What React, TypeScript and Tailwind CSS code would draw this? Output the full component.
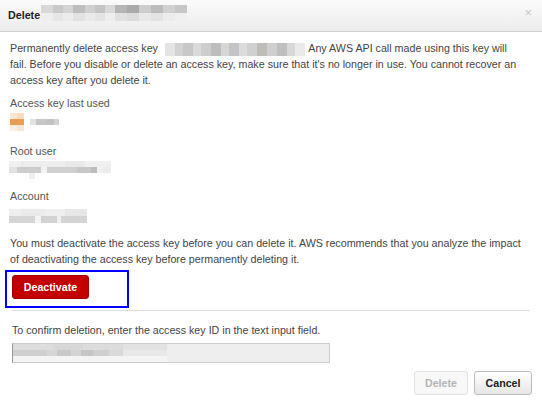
import React from "react";

type Cell = { w: number; c: string };

function Blur({ rows, h, className }: { rows: Cell[][]; h: number; className?: string }) {
  return (
    <div className={"inline-flex flex-col align-middle " + (className ?? "")}>
      {rows.map((row, i) => (
        <div key={i} className="flex">
          {row.map((cell, j) => (
            <div key={j} style={{ width: cell.w, height: h, background: cell.c }} />
          ))}
        </div>
      ))}
    </div>
  );
}

const titleRows: Cell[][] = [
  [
    { w: 12, c: "#d8d8d8" }, { w: 10, c: "#c9c9c9" }, { w: 10, c: "#d4d4d4" }, { w: 12, c: "#bdbdbd" },
    { w: 10, c: "#cfcfcf" }, { w: 10, c: "#c4c4c4" }, { w: 10, c: "#d9d9d9" }, { w: 12, c: "#b5b5b5" },
    { w: 12, c: "#a9a9a9" }, { w: 12, c: "#cdcdcd" }, { w: 12, c: "#bcbcbc" }, { w: 12, c: "#d1d1d1" },
    { w: 12, c: "#c6c6c6" },
  ],
  [
    { w: 12, c: "#eeeeee" }, { w: 10, c: "#e6e6e6" }, { w: 10, c: "#ececec" }, { w: 12, c: "#e2e2e2" },
    { w: 10, c: "#e9e9e9" }, { w: 10, c: "#e4e4e4" }, { w: 10, c: "#eeeeee" }, { w: 12, c: "#e0e0e0" },
    { w: 12, c: "#dcdcdc" }, { w: 12, c: "#e8e8e8" }, { w: 12, c: "#e3e3e3" }, { w: 12, c: "#ececec" },
    { w: 12, c: "#f0f0f0" },
  ],
];

const keyRows: Cell[][] = [
  [
    { w: 10, c: "#e4e4e4" }, { w: 8, c: "#d2d2d2" }, { w: 10, c: "#c8c8c8" }, { w: 8, c: "#dadada" },
    { w: 10, c: "#cdcdcd" }, { w: 10, c: "#bdbdbd" }, { w: 8, c: "#d6d6d6" }, { w: 10, c: "#c2c4c8" },
    { w: 8, c: "#dcdcdc" }, { w: 10, c: "#d0d0d0" }, { w: 10, c: "#c0bcb8" }, { w: 10, c: "#cfcfcf" },
    { w: 10, c: "#bfbfbf" }, { w: 8, c: "#d8d8d8" }, { w: 10, c: "#eaeaea" },
  ],
];

const lastUsedRows: Cell[][] = [
  [{ w: 7, c: "#fbe7d2" }, { w: 7, c: "#f7dcbe" }, { w: 8, c: "#ffffff" }],
  [{ w: 7, c: "#ec9d4c" }, { w: 7, c: "#ea9f55" }, { w: 6, c: "#ffffff" }, { w: 6, c: "#e2e2e2" }, { w: 10, c: "#c6c6c6" }, { w: 8, c: "#c2c2c2" }, { w: 5, c: "#d2d2d2" }],
  [{ w: 7, c: "#fcefe2" }, { w: 7, c: "#f9e6d2" }],
];

const rootRows: Cell[][] = [
  [{ w: 12, c: "#f0f0f0" }, { w: 20, c: "#ececec" }, { w: 24, c: "#eeeeee" }, { w: 20, c: "#e9e9e9" }, { w: 26, c: "#f0f0f0" }],
  [{ w: 8, c: "#e2e2e2" }, { w: 24, c: "#cdcdcd" }, { w: 6, c: "#f2f2f2" }, { w: 30, c: "#d0d0d0" }, { w: 14, c: "#c8c8c8" }, { w: 6, c: "#bdbdbd" }, { w: 6, c: "#f0f0f0" }, { w: 8, c: "#ebebeb" }],
  [{ w: 20, c: "#ffffff" }, { w: 6, c: "#efefef" }],
];

const accountRows: Cell[][] = [
  [{ w: 12, c: "#eeeeee" }, { w: 24, c: "#ebebeb" }, { w: 20, c: "#efefef" }, { w: 22, c: "#e7e7e7" }],
  [{ w: 26, c: "#d6d6d6" }, { w: 6, c: "#f4f4f4" }, { w: 16, c: "#d2d2d2" }, { w: 4, c: "#f0f0f0" }, { w: 26, c: "#d4d4d4" }],
];

const inputRows: Cell[][] = [
  [{ w: 40, c: "#dddddd" }, { w: 30, c: "#d8d8d8" }, { w: 40, c: "#dcdcdc" }, { w: 44, c: "#e2e2e2" }],
  [{ w: 34, c: "#cfcfcf" }, { w: 10, c: "#d6d6d6" }, { w: 14, c: "#c8c8c8" }, { w: 10, c: "#d4d4d4" }, { w: 12, c: "#c6c6c6" }, { w: 16, c: "#cfcfcf" }, { w: 14, c: "#d9d9d9" }, { w: 44, c: "#e8e8e8" }],
  [{ w: 154, c: "#f4f4f4" }],
];

export default function App() {
  return (
    <div className="w-[542px] h-[403px] overflow-hidden bg-white text-[10.7px] leading-[16px] text-[#444]" style={{ fontFamily: '"Liberation Sans", Arial, sans-serif' }}>
      <div className="h-[32px] flex items-start justify-between border-b border-[#cfcfcf] bg-gradient-to-b from-[#fbfbfb] to-[#ececec] pl-[8px] pr-[8px]">
        <div className="flex items-start pt-[5px]">
          <span className="font-bold text-[#222] pt-[2px] pr-[1px]">Delete</span>
          <Blur rows={titleRows} h={8} />
        </div>
        <span className="text-[#c8c8c8] text-[13px] pt-[5px] pr-[2px]">×</span>
      </div>

      <div className="px-[10px] pt-[8px]">
        <p>
          Permanently delete access key <Blur rows={keyRows} h={13} className="ml-[4px] mr-[1px]" /> Any AWS API call made using this key will
          <br />
          fail. Before you disable or delete an access key, make sure that it's no longer in use. You cannot recover an access key after you delete it.
        </p>

        <div className="mt-[7px] text-[#555]">Access key last used</div>
        <div className="mt-[2px]"><Blur rows={lastUsedRows} h={6} /></div>

        <div className="mt-[12px] text-[#555]">Root user</div>
        <div className="mt-[2px] -ml-[1px]"><Blur rows={rootRows} h={6} /></div>

        <div className="mt-[9px] text-[#555]">Account</div>
        <div className="mt-[2px] -ml-[1px]"><Blur rows={accountRows} h={7} /></div>

        <p className="mt-[12px]">
          You must deactivate the access key before you can delete it. AWS recommends that you analyze the impact of deactivating the access key before permanently deleting it.
        </p>
      </div>

      <div className="ml-[5px] mt-[3px] w-[124px] h-[38px] border-[2px] border-[#0000ff] pl-[5px] pt-[3px]">
        <button className="w-[77px] h-[24px] rounded-[3px] bg-[#c20000] border border-[#a80000] text-white font-bold text-[10.7px]">
          Deactivate
        </button>
      </div>

      <div className="mx-[12px] mt-[2px] border-t border-[#dddddd]" />

      <div className="px-[12px] pt-[11px]">
        <div>To confirm deletion, enter the access key ID in the text input field.</div>
        <div className="mt-[5px] w-[318px] h-[20px] border border-[#cccccc] border-l-[#999] bg-[#eeeeee]">
          <Blur rows={inputRows} h={6} />
        </div>
      </div>

      <div className="flex justify-end gap-[6px] pr-[10px] pt-[8px]">
        <button className="w-[54px] h-[24px] rounded-[3px] border border-[#e2e2e2] bg-[#f8f8f8] text-[#b5b5b5] font-bold text-[10.7px]">
          Delete
        </button>
        <button className="w-[58px] h-[24px] rounded-[3px] border border-[#bbbbbb] bg-gradient-to-b from-[#ffffff] to-[#e6e6e6] text-[#222] font-bold text-[10.7px]">
          Cancel
        </button>
      </div>
    </div>
  );
}
